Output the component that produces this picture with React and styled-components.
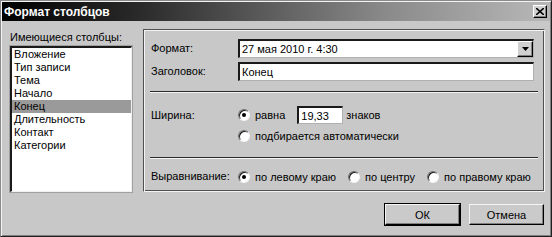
import styled, { createGlobalStyle } from "styled-components";

const GlobalStyle = createGlobalStyle`
  html, body {
    margin: 0;
    padding: 0;
    background: #c8c8c8;
  }
  body {
    font-family: "Liberation Sans", Arial, sans-serif;
    font-size: 11px;
    color: #000;
  }
`;

const Dialog = styled.div`
  width: 552px;
  height: 237px;
  box-sizing: border-box;
  background: #c8c8c8;
  border: 1px solid #8a8a8a;
  border-right-color: #202020;
  border-bottom-color: #202020;
  box-shadow: inset 1px 1px 0 #f4f4f4, inset -1px -1px 0 #808080;
  padding: 1px;
  display: flex;
  flex-direction: column;
`;

const TitleBar = styled.div`
  height: 19px;
  flex: none;
  display: flex;
  align-items: center;
  justify-content: space-between;
  padding: 0 3px 0 2px;
  background: linear-gradient(to right, #000 0%, #2a2a2a 25%, #8a8a8a 70%, #b8b8b8 100%);
`;

const Title = styled.span`
  color: #fff;
  font-weight: bold;
  font-size: 12px;
`;

const CloseButton = styled.span`
  width: 14px;
  height: 13px;
  box-sizing: border-box;
  background: #d0d0d0;
  border: 1px solid #fff;
  border-right-color: #000;
  border-bottom-color: #000;
  box-shadow: inset -1px -1px 0 #808080;
  display: flex;
  align-items: center;
  justify-content: center;
`;

const Body = styled.div`
  flex: 1;
  display: flex;
  gap: 11px;
  padding: 8px 5px 0 8px;
`;

const LeftColumn = styled.div`
  width: 122px;
  flex: none;
  display: flex;
  flex-direction: column;
`;

const Caption = styled.div`
  height: 17px;
  line-height: 17px;
  white-space: nowrap;
`;

const ListBox = styled.div`
  flex: 1;
  background: #fff;
  border-top: 2px solid #1a1a1a;
  border-left: 2px solid #1a1a1a;
  border-right: 1px solid #f0f0f0;
  border-bottom: 1px solid #f0f0f0;
  box-shadow: 0 0 0 1px #a0a0a0;
`;

const ListItem = styled.div`
  height: 13px;
  line-height: 13px;
  padding-left: 2px;
  background: ${(p) => (p.$selected ? "#9a9a9a" : "transparent")};
  white-space: nowrap;
`;

const GroupBox = styled.div`
  flex: 1;
  height: 163px;
  box-sizing: border-box;
  border: 1px solid #505050;
  border-right-color: #f4f4f4;
  border-bottom-color: #f4f4f4;
  box-shadow: inset 1px 1px 0 #f4f4f4, inset -1px -1px 0 #505050;
  display: flex;
  flex-direction: column;
`;

const Section = styled.div`
  display: grid;
  grid-template-columns: 87px 1fr;
  row-gap: 4px;
  align-items: start;
  padding: ${(p) => p.$pad};
`;

const Label = styled.div`
  line-height: ${(p) => p.$h || 19}px;
  white-space: nowrap;
`;

const Field = styled.div`
  height: ${(p) => p.$h || 19}px;
  box-sizing: border-box;
  background: #fff;
  border-top: 2px solid #1a1a1a;
  border-left: 2px solid #1a1a1a;
  border-right: 1px solid #b0b0b0;
  border-bottom: 1px solid #b0b0b0;
  display: flex;
  align-items: center;
  padding-left: 2px;
  width: ${(p) => p.$width || "auto"};
  margin-left: ${(p) => p.$ml || 0}px;
`;

const FieldText = styled.span`
  flex: 1;
  white-space: nowrap;
`;

const DropButton = styled.span`
  width: 16px;
  height: 16px;
  box-sizing: border-box;
  background: #d0d0d0;
  border: 1px solid #fff;
  border-right-color: #000;
  border-bottom-color: #000;
  box-shadow: inset -1px -1px 0 #808080;
  display: flex;
  align-items: center;
  justify-content: center;
`;

const Separator = styled.div`
  height: 0;
  border-top: 1px solid #2a2a2a;
  border-bottom: 1px solid #f4f4f4;
  margin: ${(p) => p.$margin};
`;

const Options = styled.div`
  display: flex;
  flex-direction: column;
  gap: ${(p) => p.$gap || 0}px;
`;

const OptionRow = styled.div`
  display: flex;
  align-items: center;
  height: ${(p) => p.$h || 19}px;
  gap: ${(p) => p.$gap || 0}px;
`;

const Radio = styled.label`
  display: flex;
  align-items: center;
  gap: 5px;
  white-space: nowrap;
`;

const RadioDot = styled.span`
  width: 12px;
  height: 12px;
  box-sizing: border-box;
  border-radius: 50%;
  background: #fff;
  border: 1px solid #707070;
  border-right-color: #f4f4f4;
  border-bottom-color: #f4f4f4;
  box-shadow: inset 1px 1px 0 #1a1a1a;
  display: flex;
  align-items: center;
  justify-content: center;
  &::after {
    content: "";
    width: 4px;
    height: 4px;
    border-radius: 50%;
    background: ${(p) => (p.$checked ? "#000" : "transparent")};
  }
`;

const Unit = styled.span`
  margin-left: 3px;
`;

const Footer = styled.div`
  display: flex;
  justify-content: flex-end;
  gap: 9px;
  padding: 12px 6px 10px 0;
`;

const Button = styled.button`
  width: 75px;
  height: 21px;
  box-sizing: border-box;
  font: inherit;
  color: #000;
  background: #cacaca;
  border: 1px solid #f4f4f4;
  border-right-color: #000;
  border-bottom-color: #000;
  box-shadow: inset -1px -1px 0 #808080;
  outline: ${(p) => (p.$default ? "1px solid #000" : "none")};
  padding: 0;
`;

const items = [
  "Вложение",
  "Тип записи",
  "Тема",
  "Начало",
  "Конец",
  "Длительность",
  "Контакт",
  "Категории",
];

export default function App() {
  return (
    <>
      <GlobalStyle />
      <Dialog>
        <TitleBar>
          <Title>Формат столбцов</Title>
          <CloseButton>
            <svg width="8" height="7" viewBox="0 0 8 7">
              <path d="M0 0 L8 7 M8 0 L0 7" stroke="#000" strokeWidth="1.6" />
            </svg>
          </CloseButton>
        </TitleBar>
        <Body>
          <LeftColumn>
            <Caption>Имеющиеся столбцы:</Caption>
            <ListBox>
              {items.map((it) => (
                <ListItem key={it} $selected={it === "Конец"}>
                  {it}
                </ListItem>
              ))}
            </ListBox>
          </LeftColumn>
          <GroupBox>
            <Section $pad="9px 10px 0 7px">
              <Label>Формат:</Label>
              <Field>
                <FieldText>27 мая 2010 г. 4:30</FieldText>
                <DropButton>
                  <svg width="7" height="4" viewBox="0 0 7 4">
                    <path d="M0 0 H7 L3.5 4 Z" fill="#000" />
                  </svg>
                </DropButton>
              </Field>
              <Label>Заголовок:</Label>
              <Field>
                <FieldText>Конец</FieldText>
              </Field>
            </Section>
            <Separator $margin="10px 6px 0 6px" />
            <Section $pad="13px 10px 0 7px">
              <Label $h={18}>Ширина:</Label>
              <Options $gap={4}>
                <OptionRow $h={18}>
                  <Radio>
                    <RadioDot $checked />
                    равна
                  </Radio>
                  <Field $width="46px" $h={18} $ml={12}>
                    <FieldText>19,33</FieldText>
                  </Field>
                  <Unit>знаков</Unit>
                </OptionRow>
                <OptionRow $h={16}>
                  <Radio>
                    <RadioDot />
                    подбирается автоматически
                  </Radio>
                </OptionRow>
              </Options>
            </Section>
            <Separator $margin="13px 6px 0 6px" />
            <Section $pad="8px 10px 0 7px">
              <Label>Выравнивание:</Label>
              <OptionRow $gap={12}>
                <Radio>
                  <RadioDot $checked />
                  по левому краю
                </Radio>
                <Radio>
                  <RadioDot />
                  по центру
                </Radio>
                <Radio>
                  <RadioDot />
                  по правому краю
                </Radio>
              </OptionRow>
            </Section>
          </GroupBox>
        </Body>
        <Footer>
          <Button $default>ОК</Button>
          <Button>Отмена</Button>
        </Footer>
      </Dialog>
    </>
  );
}
